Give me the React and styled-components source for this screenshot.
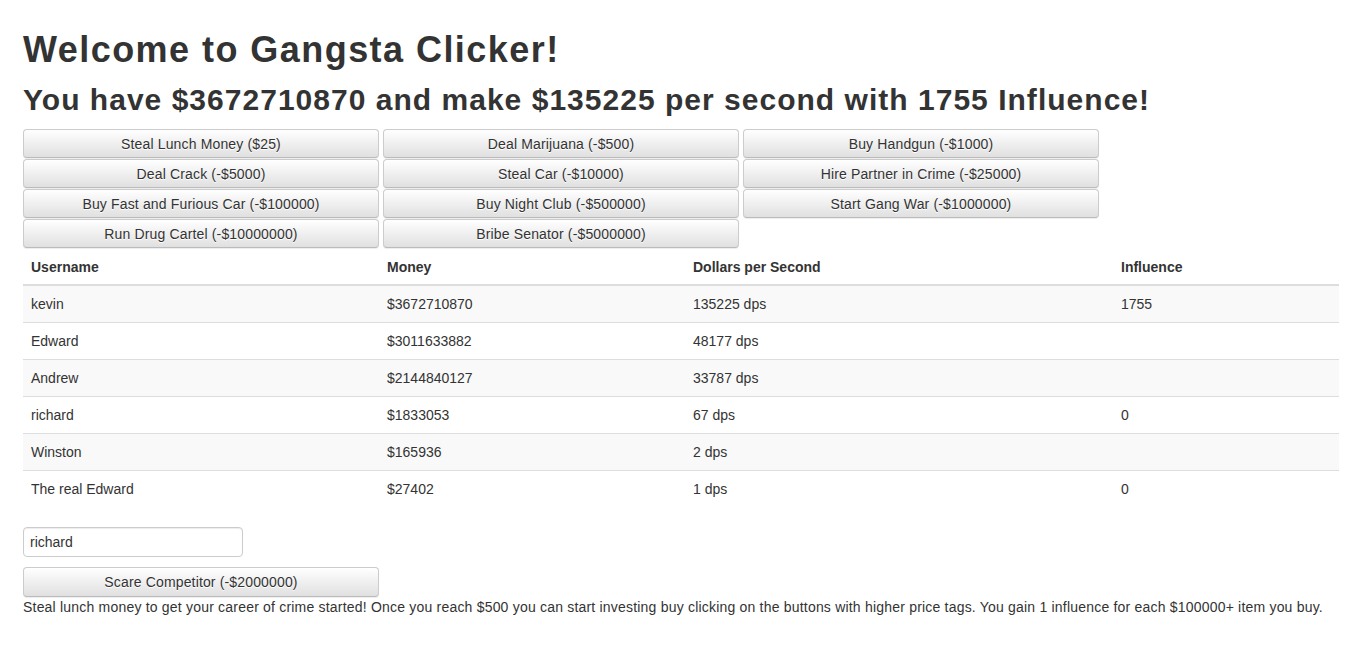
import React from "react";
import styled, { createGlobalStyle } from "styled-components";

const Global = createGlobalStyle`
  html, body { margin: 0; padding: 0; background: #fff; }
  body {
    font-family: "Liberation Sans", Arial, Helvetica, sans-serif;
    font-size: 14px;
    line-height: 20px;
    color: #333;
  }
  * { box-sizing: border-box; }
`;

const Page = styled.div`
  padding: 30px 16px 0 23px;
`;

const Title = styled.h1`
  margin: 0 0 13px;
  font-size: 36px;
  line-height: 40px;
  font-weight: bold;
  letter-spacing: 1.45px;
  color: #333;
`;

const Subtitle = styled.h2`
  margin: 0 0 13px;
  font-size: 30px;
  line-height: 33px;
  font-weight: bold;
  letter-spacing: 1.02px;
  color: #333;
`;

const ButtonGrid = styled.div`
  display: grid;
  grid-template-columns: repeat(3, 356px);
  column-gap: 4px;
  row-gap: 1px;
`;

const Button = styled.button`
  width: 356px;
  height: 29px;
  padding: 0 12px;
  font-family: inherit;
  font-size: 14px;
  line-height: 20px;
  letter-spacing: 0.15px;
  color: #333;
  background-image: linear-gradient(to bottom, #ffffff 0%, #e0e0e0 100%);
  border: 1px solid #ccc;
  border-bottom-color: #bbb;
  border-radius: 4px;
  box-shadow: inset 0 1px 0 rgba(255, 255, 255, 0.15), 0 1px 1px rgba(0, 0, 0, 0.075);
  text-shadow: 0 1px 0 #fff;
  cursor: pointer;
  white-space: nowrap;
`;

const Table = styled.table`
  width: 1316px;
  margin: 0 0 20px;
  border-collapse: collapse;
  border-spacing: 0;
`;

const HeadCell = styled.th`
  width: ${(p) => p.$w}px;
  text-align: left;
  font-weight: bold;
  padding: 9px 8px 7px;
  line-height: 20px;
  border-bottom: 2px solid #ddd;
`;

const Row = styled.tr`
  background: ${(p) => (p.$striped ? "#f9f9f9" : "#fff")};
`;

const Cell = styled.td`
  padding: 8px;
  line-height: 20px;
  border-top: 1px solid #ddd;
  vertical-align: top;
`;

const Input = styled.input`
  display: block;
  width: 220px;
  height: 30px;
  padding: 4px 6px;
  font-family: inherit;
  font-size: 14px;
  color: #333;
  border: 1px solid #ccc;
  border-radius: 4px;
  box-shadow: inset 0 1px 1px rgba(0, 0, 0, 0.075);
  margin: 0 0 10px;
  outline: none;
`;

const ScareButton = styled(Button)`
  display: block;
  height: 30px;
`;

const Note = styled.p`
  margin: 0;
  font-size: 14px;
  line-height: 20px;
  letter-spacing: 0.2px;
  white-space: nowrap;
`;

const buttons = [
  "Steal Lunch Money ($25)",
  "Deal Marijuana (-$500)",
  "Buy Handgun (-$1000)",
  "Deal Crack (-$5000)",
  "Steal Car (-$10000)",
  "Hire Partner in Crime (-$25000)",
  "Buy Fast and Furious Car (-$100000)",
  "Buy Night Club (-$500000)",
  "Start Gang War (-$1000000)",
  "Run Drug Cartel (-$10000000)",
  "Bribe Senator (-$5000000)",
];

const rows = [
  ["kevin", "$3672710870", "135225 dps", "1755"],
  ["Edward", "$3011633882", "48177 dps", ""],
  ["Andrew", "$2144840127", "33787 dps", ""],
  ["richard", "$1833053", "67 dps", "0"],
  ["Winston", "$165936", "2 dps", ""],
  ["The real Edward", "$27402", "1 dps", "0"],
];

const cols = [
  ["Username", 356],
  ["Money", 306],
  ["Dollars per Second", 428],
  ["Influence", 226],
];

export default function App() {
  return (
    <>
      <Global />
      <Page>
        <Title>Welcome to Gangsta Clicker!</Title>
        <Subtitle>You have $3672710870 and make $135225 per second with 1755 Influence!</Subtitle>
        <ButtonGrid>
          {buttons.map((b) => (
            <Button key={b}>{b}</Button>
          ))}
        </ButtonGrid>
        <Table>
          <thead>
            <tr>
              {cols.map(([c, w]) => (
                <HeadCell key={c} $w={w}>{c}</HeadCell>
              ))}
            </tr>
          </thead>
          <tbody>
            {rows.map((r, i) => (
              <Row key={r[0]} $striped={i % 2 === 0}>
                {r.map((c, j) => (
                  <Cell key={j}>{c}</Cell>
                ))}
              </Row>
            ))}
          </tbody>
        </Table>
        <Input defaultValue="richard" />
        <ScareButton>Scare Competitor (-$2000000)</ScareButton>
        <Note>
          Steal lunch money to get your career of crime started! Once you reach $500 you can start investing buy clicking on the buttons with higher price tags. You gain 1 influence for each $100000+ item you buy.
        </Note>
      </Page>
    </>
  );
}
